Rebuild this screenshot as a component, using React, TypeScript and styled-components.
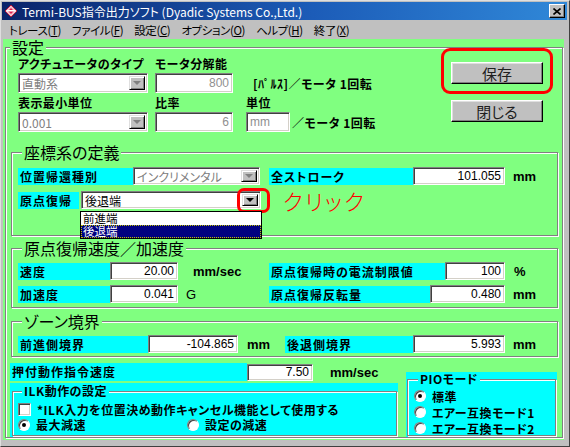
import React from 'react';
import styled, { createGlobalStyle, css } from 'styled-components';

const JP = `"Noto Sans CJK JP", "Liberation Sans", sans-serif`;
const NUM = `"Liberation Sans", "Noto Sans CJK JP", sans-serif`;

const GREEN = '#80ff80';
const CYAN = '#00ffff';

const GlobalStyle = createGlobalStyle`
  html, body { margin: 0; padding: 0; background: #c0c0c0; }
  body {
    font-family: ${JP};
    font-feature-settings: "palt";
  }
`;

const Window = styled.div`
  width: 570px;
  height: 447px;
  box-sizing: border-box;
  background: #c0c0c0;
  border: 1px solid;
  border-color: #dfdfdf #404040 #404040 #dfdfdf;
  padding: 1px 2px 6px 1px;
  display: flex;
  flex-direction: column;
  overflow: hidden;
`;

const TitleBar = styled.div`
  height: 18px;
  flex: none;
  display: flex;
  align-items: center;
  padding: 0 2px 0 2px;
  gap: 4px;
  background: linear-gradient(90deg, #0a246a 0%, #1c5cb8 55%, #3088d8 100%);
  color: #fff;
  font-size: 12px;
`;

const TitleText = styled.span`
  flex: 1;
  white-space: nowrap;
`;

const CloseBtn = styled.span`
  width: 16px;
  height: 14px;
  box-sizing: border-box;
  background: #c0c0c0;
  border: 1px solid;
  border-color: #fff #000 #000 #fff;
  box-shadow: inset -1px -1px #808080;
  display: flex;
  align-items: center;
  justify-content: center;
`;

const MenuBar = styled.div`
  height: 19px;
  flex: none;
  display: flex;
  align-items: center;
  gap: 11px;
  padding-left: 7px;
  font-size: 11.5px;
  letter-spacing: -0.4px;
  color: #000;
`;

const MenuItem = styled.span`
  white-space: nowrap;
  u { text-decoration: underline; }
`;

const Client = styled.div`
  flex: 1;
  margin: 0 3px 0 1px;
  background: ${GREEN};
  display: flex;
  flex-direction: column;
  min-height: 0;
`;

const Group = styled.fieldset<{ $mt?: number; $ml?: number; $mr?: number; $pt?: number; $pb?: number; $pl?: number }>`
  margin: ${(p) => p.$mt ?? 0}px ${(p) => p.$mr ?? 0}px 0 ${(p) => p.$ml ?? 0}px;
  padding: ${(p) => p.$pt ?? 0}px 0 ${(p) => p.$pb ?? 0}px ${(p) => p.$pl ?? 0}px;
  border: 1px solid #808080;
  box-shadow: inset 1px 1px #fff, 1px 1px #fff;
  min-width: 0;
`;

const MainGroup = styled(Group)`
  flex: 1;
  margin: 0 1px 2px 2px;
  display: flex;
  flex-direction: column;
`;

const Legend = styled.legend<{ $bg: string; $size: number; $lh: number; $bold?: boolean }>`
  margin-left: 4px;
  padding: 0 2px;
  background: ${(p) => p.$bg};
  font-size: ${(p) => p.$size}px;
  line-height: ${(p) => p.$lh}px;
  font-weight: ${(p) => (p.$bold ? 700 : 400)};
  letter-spacing: ${(p) => (p.$bold ? 0.5 : 0)}px;
  color: #000;
`;

/* ---------- top settings ---------- */

const TopArea = styled.div`
  height: 78px;
  flex: none;
  display: flex;
  justify-content: space-between;
  align-items: flex-start;
  padding: 0 19px 0 12px;
`;

const FormGrid = styled.div`
  display: grid;
  grid-template-columns: 137px 91px auto;
  grid-template-rows: 18px 20px 19px 20px;
`;

const TopLabel = styled.span`
  align-self: end;
  font-size: 12px;
  line-height: 16px;
  font-weight: 700;
  letter-spacing: 0.4px;
  white-space: nowrap;
  padding-bottom: 1px;
`;

const Note = styled.span<{ $ml: number }>`
  margin-left: ${(p) => p.$ml}px;
  font-size: 12px;
  font-weight: 700;
  letter-spacing: 0.5px;
  white-space: nowrap;
  align-self: center;
`;

const Inline = styled.div`
  display: flex;
  align-items: center;
`;

const sunken = css`
  background: #fff;
  border: 1px solid;
  border-color: #808080 #fff #fff #808080;
  box-shadow: inset 1px 1px #404040, inset -1px -1px #d4d0c8;
`;

const Combo = styled.div<{ $w: number; $h: number }>`
  position: relative;
  width: ${(p) => p.$w}px;
  height: ${(p) => p.$h}px;
  box-sizing: border-box;
  ${sunken}
  display: flex;
  align-items: center;
  padding: 0 2px 0 3px;
  flex: none;
`;

const ComboText = styled.span<{ $disabled?: boolean }>`
  flex: 1;
  font-size: 12px;
  white-space: nowrap;
  overflow: hidden;
  color: ${(p) => (p.$disabled ? '#808080' : '#000')};
`;

const DropBtn = styled.span<{ $disabled?: boolean }>`
  position: relative;
  width: 16px;
  height: calc(100% - 4px);
  box-sizing: border-box;
  background: #c0c0c0;
  border: 1px solid;
  border-color: #dfdfdf #000 #000 #dfdfdf;
  box-shadow: inset 1px 1px #fff, inset -1px -1px #808080;
  display: flex;
  align-items: center;
  justify-content: center;
  &::after {
    content: '';
    border-left: 4px solid transparent;
    border-right: 4px solid transparent;
    border-top: 4px solid ${(p) => (p.$disabled ? '#808080' : '#000')};
  }
`;

const Field = styled.div<{ $w: number; $h: number; $disabled?: boolean; $left?: boolean }>`
  width: ${(p) => p.$w}px;
  height: ${(p) => p.$h}px;
  box-sizing: border-box;
  ${sunken}
  flex: none;
  padding: 0 3px;
  display: flex;
  align-items: center;
  justify-content: ${(p) => (p.$left ? 'flex-start' : 'flex-end')};
  font-family: ${NUM};
  font-size: 12px;
  color: ${(p) => (p.$disabled ? '#909090' : '#000')};
`;

const ButtonCol = styled.div`
  display: flex;
  flex-direction: column;
  gap: 16px;
  padding-top: 7px;
`;

const Marked = styled.div`
  position: relative;
`;

const Ring = styled.span<{ $t: number; $l: number; $r: number; $b: number; $rad: number }>`
  position: absolute;
  top: ${(p) => -p.$t}px;
  left: ${(p) => -p.$l}px;
  right: ${(p) => -p.$r}px;
  bottom: ${(p) => -p.$b}px;
  border: 3px solid #ff0000;
  border-radius: ${(p) => p.$rad}px;
  pointer-events: none;
`;

const Button = styled.div`
  width: 92px;
  height: 22px;
  box-sizing: border-box;
  background: #c0c0c0;
  border: 1px solid;
  border-color: #fff #000 #000 #fff;
  box-shadow: inset -1px -1px #808080, inset 1px 1px #dfdfdf;
  display: flex;
  align-items: center;
  justify-content: center;
  font-size: 15px;
  color: #202020;
`;

/* ---------- rows ---------- */

const Row = styled.div<{ $mt?: number }>`
  height: 18px;
  margin-top: ${(p) => p.$mt ?? 0}px;
  display: flex;
  align-items: center;
`;

const Half = styled.div<{ $w: number }>`
  width: ${(p) => p.$w}px;
  display: flex;
  align-items: center;
  flex: none;
`;

const CyanLabel = styled.span<{ $w: number; $h?: number; $ml?: number; $mr?: number }>`
  width: ${(p) => p.$w}px;
  height: ${(p) => p.$h ?? 17}px;
  margin-left: ${(p) => p.$ml ?? 0}px;
  margin-right: ${(p) => p.$mr ?? 0}px;
  box-sizing: border-box;
  flex: none;
  background: ${CYAN};
  padding-left: 2px;
  font-size: 12px;
  line-height: ${(p) => p.$h ?? 17}px;
  font-weight: 700;
  letter-spacing: 1px;
  white-space: nowrap;
  overflow: hidden;
`;

const Unit = styled.span<{ $ml: number; $plain?: boolean }>`
  margin-left: ${(p) => p.$ml}px;
  font-family: ${NUM};
  font-size: 13px;
  font-weight: ${(p) => (p.$plain ? 400 : 700)};
  white-space: nowrap;
`;

const DropList = styled.div`
  position: absolute;
  left: -2px;
  right: -2px;
  top: 19px;
  background: #fff;
  border: 1px solid #000;
  z-index: 2;
`;

const DropItem = styled.div<{ $sel?: boolean }>`
  height: 13px;
  line-height: 13px;
  padding-left: 2px;
  font-size: 11.5px;
  color: #000;
  ${(p) =>
    p.$sel &&
    css`
      background: #000080;
      color: #fff;
      outline: 1px dotted #c0c000;
      outline-offset: -1px;
    `}
`;

const Click = styled.span`
  margin-left: 22px;
  color: #ff0000;
  font-size: 22px;
  font-weight: 300;
  letter-spacing: 2px;
  line-height: 22px;
  white-space: nowrap;
`;

/* ---------- bottom ---------- */

const Bottom = styled.div`
  height: 80px;
  flex: none;
  display: flex;
  padding: 0 5px 0 4px;
`;

const LeftCol = styled.div`
  width: 388px;
  display: flex;
  flex-direction: column;
  padding-top: 6px;
  box-sizing: border-box;
`;

const CyanBox = styled.div<{ $mt: number; $ml?: number; $w?: number; $pl: number }>`
  margin-top: ${(p) => p.$mt}px;
  margin-left: ${(p) => p.$ml ?? 0}px;
  ${(p) => (p.$w ? `width: ${p.$w}px;` : 'flex: 1;')}
  background: ${CYAN};
  padding: 0 1px 1px ${(p) => p.$pl}px;
  display: flex;
  box-sizing: border-box;
`;

const InnerGroup = styled(Group)`
  flex: 1;
`;

const Option = styled.div<{ $w?: number }>`
  ${(p) => (p.$w ? `width: ${p.$w}px;` : '')}
  height: 15px;
  display: flex;
  align-items: center;
  gap: 6px;
  font-size: 12px;
  font-weight: 700;
  letter-spacing: 0.5px;
  white-space: nowrap;
  flex: none;
`;

const OptionRow = styled.div<{ $h: number }>`
  height: ${(p) => p.$h}px;
  display: flex;
  align-items: center;
`;

const Radio = styled.span<{ $on?: boolean }>`
  position: relative;
  width: 12px;
  height: 12px;
  box-sizing: border-box;
  border-radius: 50%;
  background: #fff;
  border: 1px solid;
  border-color: #808080 #fff #fff #808080;
  box-shadow: inset 1px 1px #404040;
  flex: none;
  ${(p) =>
    p.$on &&
    css`
      &::after {
        content: '';
        position: absolute;
        left: 3px;
        top: 3px;
        width: 4px;
        height: 4px;
        border-radius: 50%;
        background: #000;
      }
    `}
`;

const Check = styled.span`
  width: 13px;
  height: 13px;
  box-sizing: border-box;
  background: #fff;
  border: 1px solid;
  border-color: #808080 #fff #fff #808080;
  box-shadow: inset 1px 1px #404040, inset -1px -1px #d4d0c8;
  flex: none;
`;

const AppIcon = () => (
  <svg width="14" height="14" viewBox="0 0 14 14">
    <path d="M7 1 L13 7 L7 13 L1 7 Z" fill="#f4c0cc" stroke="#b01840" strokeWidth="1" />
    <path d="M7 4 L10 7 L7 10 L4 7 Z" fill="#e02050" />
    <rect x="2.5" y="6" width="9" height="1.5" fill="#fff" />
  </svg>
);

const CloseX = () => (
  <svg width="8" height="7" viewBox="0 0 8 7">
    <path d="M0.5 0.5 L7.5 6.5 M7.5 0.5 L0.5 6.5" stroke="#000" strokeWidth="1.6" />
  </svg>
);

const menus = [
  { label: 'トレース', key: 'T' },
  { label: 'ファイル', key: 'F' },
  { label: '設定', key: 'C' },
  { label: 'オプション', key: 'O' },
  { label: 'ヘルプ', key: 'H' },
  { label: '終了', key: 'X' },
];

export default function App() {
  return (
    <>
      <GlobalStyle />
      <Window>
        <TitleBar>
          <AppIcon />
          <TitleText>Termi-BUS指令出力ソフト (Dyadic Systems Co.,Ltd.)</TitleText>
          <CloseBtn>
            <CloseX />
          </CloseBtn>
        </TitleBar>

        <MenuBar>
          {menus.map((m) => (
            <MenuItem key={m.key}>
              {m.label}(<u>{m.key}</u>)
            </MenuItem>
          ))}
        </MenuBar>

        <Client>
          <MainGroup>
            <Legend $bg={GREEN} $size={16} $lh={16}>設定</Legend>

            <TopArea>
              <FormGrid>
                <TopLabel>アクチュエータのタイプ</TopLabel>
                <TopLabel>モータ分解能</TopLabel>
                <span />
                <Combo $w={130} $h={20}>
                  <ComboText $disabled>直動系</ComboText>
                  <DropBtn $disabled />
                </Combo>
                <Field $w={78} $h={20} $disabled>800</Field>
                <Note $ml={7}>[ﾊﾟﾙｽ]／モータ 1回転</Note>
                <TopLabel>表示最小単位</TopLabel>
                <TopLabel>比率</TopLabel>
                <TopLabel>単位</TopLabel>
                <Combo $w={130} $h={20}>
                  <ComboText $disabled>0.001</ComboText>
                  <DropBtn $disabled />
                </Combo>
                <Field $w={78} $h={20} $disabled>6</Field>
                <Inline>
                  <Field $w={44} $h={20} $disabled $left>mm</Field>
                  <Note $ml={2}>／モータ 1回転</Note>
                </Inline>
              </FormGrid>

              <ButtonCol>
                <Marked>
                  <Button>保存</Button>
                  <Ring $t={14} $l={10} $r={10} $b={10} $rad={9} />
                </Marked>
                <Button>閉じる</Button>
              </ButtonCol>
            </TopArea>

            <Group $mt={11} $ml={5} $mr={4} $pt={7} $pb={26} $pl={6}>
              <Legend $bg={GREEN} $size={16} $lh={16}>座標系の定義</Legend>
              <Row>
                <CyanLabel $w={115}>位置帰還種別</CyanLabel>
                <Combo $w={127} $h={18}>
                  <ComboText $disabled>インクリメンタル</ComboText>
                  <DropBtn $disabled />
                </Combo>
                <CyanLabel $w={144} $ml={9}>全ストローク</CyanLabel>
                <Field $w={92} $h={18}>101.055</Field>
                <Unit $ml={8}>mm</Unit>
              </Row>
              <Row $mt={6}>
                <CyanLabel $w={61} $mr={2}>原点復帰</CyanLabel>
                <Combo $w={180} $h={18}>
                  <ComboText>後退端</ComboText>
                  <DropBtn>
                    <Ring $t={7} $l={6} $r={13} $b={8} $rad={7} />
                  </DropBtn>
                  <DropList>
                    <DropItem>前進端</DropItem>
                    <DropItem $sel>後退端</DropItem>
                  </DropList>
                </Combo>
                <Click>クリック</Click>
              </Row>
            </Group>

            <Group $mt={4} $ml={5} $mr={4} $pt={6} $pb={4} $pl={6}>
              <Legend $bg={GREEN} $size={16} $lh={16}>原点復帰速度／加速度</Legend>
              <Row>
                <Half $w={251}>
                  <CyanLabel $w={92}>速度</CyanLabel>
                  <Field $w={68} $h={18}>20.00</Field>
                  <Unit $ml={15}>mm/sec</Unit>
                </Half>
                <CyanLabel $w={176}>原点復帰時の電流制限値</CyanLabel>
                <Field $w={60} $h={18}>100</Field>
                <Unit $ml={9}>%</Unit>
              </Row>
              <Row $mt={5}>
                <Half $w={251}>
                  <CyanLabel $w={92}>加速度</CyanLabel>
                  <Field $w={68} $h={18}>0.041</Field>
                  <Unit $ml={8} $plain>G</Unit>
                </Half>
                <CyanLabel $w={161}>原点復帰反転量</CyanLabel>
                <Field $w={75} $h={18}>0.480</Field>
                <Unit $ml={8}>mm</Unit>
              </Row>
            </Group>

            <Group $mt={5} $ml={5} $mr={4} $pt={6} $pb={3} $pl={6}>
              <Legend $bg={GREEN} $size={16} $lh={16}>ゾーン境界</Legend>
              <Row>
                <Half $w={267}>
                  <CyanLabel $w={130}>前進側境界</CyanLabel>
                  <Field $w={90} $h={18}>-104.865</Field>
                  <Unit $ml={9}>mm</Unit>
                </Half>
                <CyanLabel $w={128}>後退側境界</CyanLabel>
                <Field $w={92} $h={18}>5.993</Field>
                <Unit $ml={8}>mm</Unit>
              </Row>
            </Group>

            <Bottom>
              <LeftCol>
                <Row>
                  <CyanLabel $w={237} $h={18}>押付動作指令速度</CyanLabel>
                  <Field $w={66} $h={17}>7.50</Field>
                  <Unit $ml={17}>mm/sec</Unit>
                </Row>
                <CyanBox $mt={2} $pl={2}>
                  <InnerGroup $pt={3} $pl={5}>
                    <Legend $bg={CYAN} $size={12} $lh={16} $bold>ILK動作の設定</Legend>
                    <OptionRow $h={15}>
                      <Option>
                        <Check />
                        *ILK入力を位置決め動作キャンセル機能として使用する
                      </Option>
                    </OptionRow>
                    <OptionRow $h={15}>
                      <Option $w={169}>
                        <Radio $on />
                        最大減速
                      </Option>
                      <Option>
                        <Radio />
                        設定の減速
                      </Option>
                    </OptionRow>
                  </InnerGroup>
                </CyanBox>
              </LeftCol>

              <CyanBox $mt={15} $ml={8} $w={151} $pl={1}>
                <InnerGroup $pt={2} $pl={6}>
                  <Legend $bg={CYAN} $size={12} $lh={14} $bold>PIOモード</Legend>
                  <OptionRow $h={16}>
                    <Option>
                      <Radio $on />
                      標準
                    </Option>
                  </OptionRow>
                  <OptionRow $h={16}>
                    <Option>
                      <Radio />
                      エアー互換モード1
                    </Option>
                  </OptionRow>
                  <OptionRow $h={16}>
                    <Option>
                      <Radio />
                      エアー互換モード2
                    </Option>
                  </OptionRow>
                </InnerGroup>
              </CyanBox>
            </Bottom>
          </MainGroup>
        </Client>
      </Window>
    </>
  );
}
